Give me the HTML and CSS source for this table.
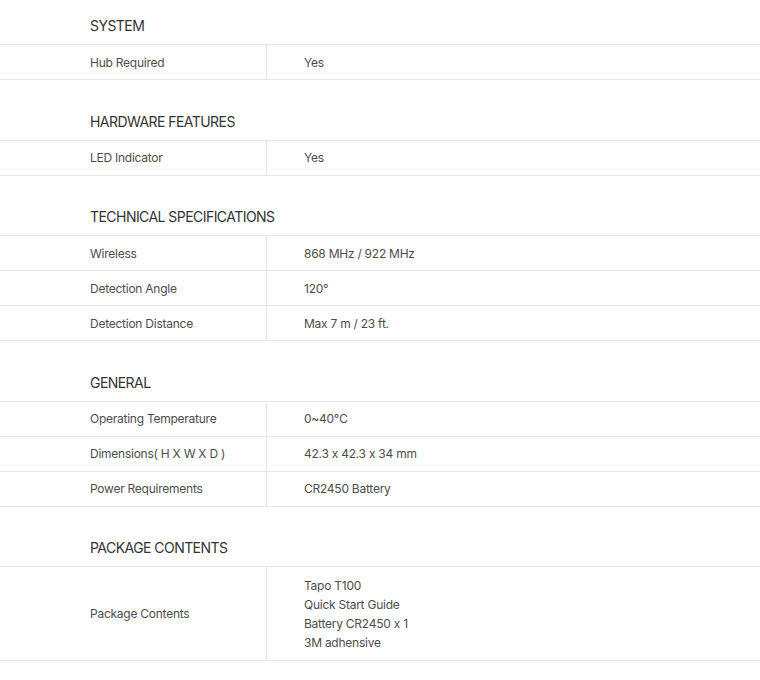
FILE: index.html
```html
<!DOCTYPE html>
<html>
<head>
<meta charset="utf-8">
<link rel="stylesheet" href="styles.css">
</head>
<body>
<div class="specs">
  <section class="section">
    <h3 class="heading">SYSTEM</h3>
    <div class="row"><div class="label">Hub Required</div><div class="value">Yes</div></div>
  </section>
  <section class="section">
    <h3 class="heading">HARDWARE FEATURES</h3>
    <div class="row"><div class="label">LED Indicator</div><div class="value">Yes</div></div>
  </section>
  <section class="section">
    <h3 class="heading">TECHNICAL SPECIFICATIONS</h3>
    <div class="row"><div class="label">Wireless</div><div class="value">868 MHz / 922 MHz</div></div>
    <div class="row"><div class="label">Detection Angle</div><div class="value">120°</div></div>
    <div class="row"><div class="label">Detection Distance</div><div class="value">Max 7 m / 23 ft.</div></div>
  </section>
  <section class="section">
    <h3 class="heading">GENERAL</h3>
    <div class="row"><div class="label">Operating Temperature</div><div class="value">0~40℃</div></div>
    <div class="row"><div class="label">Dimensions( H X W X D )</div><div class="value">42.3 x 42.3 x 34 mm</div></div>
    <div class="row"><div class="label">Power Requirements</div><div class="value">CR2450 Battery</div></div>
  </section>
  <section class="section">
    <h3 class="heading">PACKAGE CONTENTS</h3>
    <div class="row multi"><div class="label">Package Contents</div><div class="value">Tapo T100<br>Quick Start Guide<br>Battery CR2450 x 1<br>3M adhensive</div></div>
  </section>
</div>
</body>
</html>
```
FILE: styles.css
```css
html, body {
  margin: 0;
  padding: 0;
  background: #fff;
}
body {
  font-family: Inter, "Noto Sans", sans-serif;
  font-feature-settings: "calt" 0;
  color: #4d4d4d;
}
.section {
  margin-bottom: 15.5px;
}
.heading {
  margin: 0;
  padding: 16px 0 8px 90px;
  font-size: 14px;
  line-height: 20px;
  font-weight: 400;
  letter-spacing: -0.55px;
  color: #333;
  border-bottom: 1px solid #e6e6e8;
}
.row {
  display: flex;
  border-bottom: 1px solid #e6e6e8;
  font-size: 12px;
  line-height: 19px;
  letter-spacing: -0.25px;
}
.label {
  width: 176px;
  padding-left: 90px;
  border-right: 1px solid #e6e6e8;
  display: flex;
  align-items: center;
  min-height: 34px;
}
.value {
  flex: 1;
  padding-left: 37px;
  display: flex;
  align-items: center;
  min-height: 34px;
}
.multi .value {
  display: block;
  padding-top: 8.5px;
  padding-bottom: 8.5px;
}
```
